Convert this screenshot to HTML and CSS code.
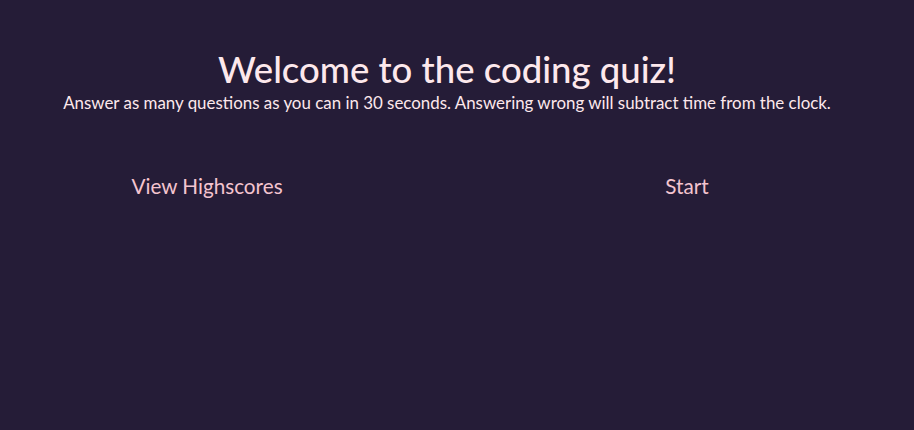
FILE: index.html
```html
<!DOCTYPE html>
<html>
<head>
<meta charset="utf-8">
<link rel="stylesheet" href="styles.css">
</head>
<body>
<main class="intro">
  <div class="header">
    <h1 class="title">Welcome to the coding quiz!</h1>
    <p class="subtitle">Answer as many questions as you can in 30 seconds. Answering wrong will subtract time from the clock.</p>
  </div>
  <div class="actions">
    <div class="action-cell"><button class="link-btn">View Highscores</button></div>
    <div class="action-cell"><button class="link-btn">Start</button></div>
  </div>
</main>
</body>
</html>
```
FILE: styles.css
```css
html, body {
  margin: 0;
  padding: 0;
  height: 100%;
}
body {
  background: #251c37;
  font-family: "Lato", "Noto Sans", sans-serif;
  color: #fde8ec;
}
.intro {
  display: flex;
  flex-direction: column;
  padding-top: 48px;
}
.header {
  display: flex;
  flex-direction: column;
  align-items: center;
  padding-right: 20px;
}
.title {
  margin: 0;
  font-size: 36.5px;
  font-weight: 500;
  line-height: 42px;
  color: #fde8ec;
}
.subtitle {
  margin: 2px 0 0;
  font-size: 16.9px;
  line-height: 21px;
  color: #fde8ec;
}
.actions {
  display: flex;
  width: 100%;
  justify-content: space-between;
  padding: 61px 0 0;
  box-sizing: border-box;
}
.action-cell {
  display: flex;
  justify-content: center;
}
.action-cell:first-child { width: 414px; }
.action-cell:last-child { width: 454px; }
.link-btn {
  background: none;
  border: none;
  padding: 0;
  font-family: inherit;
  font-size: 20.7px;
  line-height: 24px;
  color: #f4c4cf;
  cursor: pointer;
}
```
